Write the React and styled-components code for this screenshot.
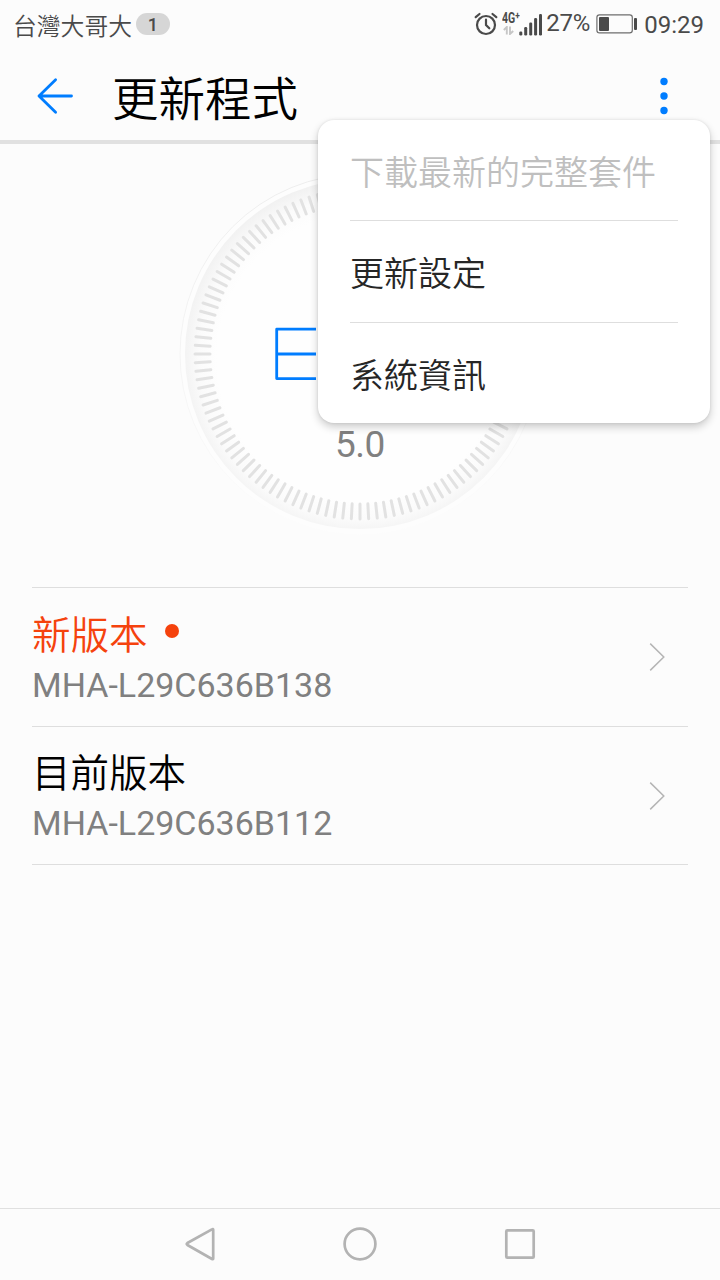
import React from 'react'
import styled, { createGlobalStyle } from 'styled-components'

const App = () => {
   const menuItems = [
      { id: 1, label: '下載最新的完整套件', disabled: true },
      { id: 2, label: '更新設定' },
      { id: 3, label: '系統資訊' },
   ]

   const versions = [
      { id: 1, title: '新版本', code: 'MHA-L29C636B138', isNew: true },
      { id: 2, title: '目前版本', code: 'MHA-L29C636B112' },
   ]

   return (
      <Screen>
         <GlobalStyle />
         <StatusBar>
            <Carrier>台灣大哥大</Carrier>
            <CountBadge>1</CountBadge>
            <StatusIcons />
         </StatusBar>
         <Header>
            <BackIcon />
            <Title>更新程式</Title>
            <MoreButton>
               <MoreDots />
               <Menu>
                  {menuItems.map((item) => (
                     <MenuItem key={item.id} $disabled={item.disabled}>
                        {item.label}
                     </MenuItem>
                  ))}
               </Menu>
            </MoreButton>
         </Header>
         <DialArea>
            <Dial />
            <DialVersion>5.0</DialVersion>
         </DialArea>
         <VersionList>
            {versions.map((item) => (
               <VersionRow key={item.id}>
                  <VersionText>
                     <VersionTitle $isNew={item.isNew}>
                        {item.title}
                        {item.isNew && <NewDot />}
                     </VersionTitle>
                     <VersionCode>{item.code}</VersionCode>
                  </VersionText>
                  <Chevron />
               </VersionRow>
            ))}
         </VersionList>
         <NavBar>
            <NavIcon viewBox="0 0 40 40">
               <path d="M31.9 5.4 L7.4 19 Q6 20 7.4 21 L32 35 Q33.2 35.6 33.2 34.4 V5.8 Q33.2 4.6 31.9 5.4 Z" />
            </NavIcon>
            <NavIcon viewBox="0 0 40 40">
               <circle cx="20" cy="20" r="15.4" />
            </NavIcon>
            <NavIcon viewBox="0 0 40 40">
               <rect x="6.3" y="6.3" width="27.4" height="27.4" rx="1" />
            </NavIcon>
         </NavBar>
      </Screen>
   )
}

export default App

const StatusIcons = () => (
   <StatusRight>
      <AlarmIcon viewBox="0 0 24 24">
         <circle cx="12" cy="13" r="9" />
         <path d="M12 7.7 V13 L15.3 16.3" />
         <path d="M1.7 5.2 L5.5 2 M22.3 5.2 L18.5 2" />
      </AlarmIcon>
      <Network>
         <NetworkType>
            4G<sup>+</sup>
         </NetworkType>
         <svg width="12" height="9" viewBox="0 0 12 9" fill="none" stroke="#c6c6c6" strokeWidth="1.9">
            <path d="M0.8 4 L3.8 1 V8.4 M7 0.6 V8 L10.2 5" />
         </svg>
      </Network>
      <svg width="24" height="23" viewBox="0 0 24 23" fill="#4a4a4a">
         <rect x="0.3" y="18.5" width="3" height="4" rx="1.2" />
         <rect x="5.2" y="14" width="3" height="8.5" rx="1.2" />
         <rect x="10.2" y="9.5" width="3" height="13" rx="1.2" />
         <rect x="15.1" y="5" width="3" height="17.5" rx="1.2" />
         <rect x="20" y="1" width="3" height="21.5" rx="1.2" />
      </svg>
      <Percent>27%</Percent>
      <BatteryIcon viewBox="0 0 42 20">
         <rect x="0.9" y="0.9" width="35.4" height="18" rx="2.6" fill="none" stroke="#6d6d6d" strokeWidth="1.2" />
         <rect x="3" y="3" width="10" height="14" rx="1" fill="#4a4a4a" />
         <rect x="38" y="4" width="3" height="12" rx="1" fill="#4a4a4a" />
      </BatteryIcon>
      <Clock>09:29</Clock>
   </StatusRight>
)

const BackIcon = () => (
   <BackSvg viewBox="0 0 40 40">
      <path d="M20.6 3.8 L4 20 L20.6 36.3 M4 20 H36.5" />
   </BackSvg>
)

const MoreDots = () => (
   <svg width="10" height="40" viewBox="0 0 10 40" fill="#007dff">
      <circle cx="5" cy="5.5" r="3.7" />
      <circle cx="5" cy="20" r="3.7" />
      <circle cx="5" cy="34.5" r="3.7" />
   </svg>
)

const Dial = () => (
   <svg width="370" height="370" viewBox="-185 -185 370 370">
      <defs>
         <radialGradient id="face" gradientUnits="userSpaceOnUse" cx="0" cy="4" r="179">
            <stop offset="0.8" stopColor="#fefefe" />
            <stop offset="0.9" stopColor="#fbfbfb" />
            <stop offset="1" stopColor="#f1f1f1" />
         </radialGradient>
         <linearGradient id="rim" x1="0" y1="0" x2="0" y2="1">
            <stop offset="0" stopColor="#ededed" />
            <stop offset="0.75" stopColor="#f8f8f8" />
            <stop offset="1" stopColor="#fdfdfd" />
         </linearGradient>
      </defs>
      <circle r="180" fill="#fdfdfd" stroke="url(#rim)" />
      <circle r="175" fill="url(#face)" />
      {/* 120 ticks, one every 3 degrees */}
      <g stroke="#e2e2e2" strokeWidth="3" strokeLinecap="round">
         {Array.from({ length: 120 }, (_, i) => (
            <line key={i} x1="0" y1="-150" x2="0" y2="-165" transform={`rotate(${i * 3})`} />
         ))}
      </g>
      <path d="M-44 -24.8 H-83.3 V24.6 H-44 M-83 0 H-44" fill="none" stroke="#007dff" strokeWidth="2.8" strokeLinejoin="round" />
   </svg>
)

const Chevron = () => (
   <ChevronSvg viewBox="0 0 16 30">
      <path d="M1.2 1.6 L14.8 15 L1.2 28.4" />
   </ChevronSvg>
)

// Styled Components
const GlobalStyle = createGlobalStyle`
   * {
      box-sizing: border-box;
   }

   body {
      margin: 0;
      background-color: #fcfcfc;
      font-family: Roboto, 'Noto Sans CJK TC', sans-serif;
   }

   svg {
      display: block;
      flex-shrink: 0;
   }
`

const Screen = styled.div`
   display: flex;
   flex-direction: column;
   width: 720px;
   height: 1280px;
   background-color: #fcfcfc;
   overflow: hidden;
`

const StatusBar = styled.div`
   display: flex;
   align-items: center;
   height: 48px;
   padding: 0 16px 0 13px;
   color: #4a4a4a;
`

const Carrier = styled.span`
   font-family: 'Noto Sans CJK TC', sans-serif;
   font-size: 23.8px;
   font-weight: 350;
   line-height: 49px;
`

const CountBadge = styled.span`
   width: 34px;
   height: 22px;
   margin-left: 4px;
   border-radius: 11px;
   background-color: #d6d6d6;
   font-size: 18px;
   font-weight: 500;
   line-height: 23px;
   text-align: center;
`

const StatusRight = styled.div`
   display: flex;
   align-items: center;
   margin-left: auto;
`

const AlarmIcon = styled.svg`
   width: 24px;
   height: 24px;
   fill: none;
   stroke: #4a4a4a;
   stroke-width: 2.2;
   stroke-linecap: round;
`

const Network = styled.div`
   display: flex;
   flex-direction: column;
   align-items: flex-start;
   width: 17px;
   height: 24px;
   margin-left: 4px;

   svg {
      margin: 1px 0 0 1px;
   }
`

const NetworkType = styled.span`
   font-size: 14px;
   font-weight: 700;
   line-height: 13px;
   white-space: nowrap;
   transform: scaleX(0.75);
   transform-origin: left;

   sup {
      font-size: 11px;
      line-height: 0;
      vertical-align: 4px;
   }
`

const Percent = styled.span`
   margin-left: 3px;
   font-size: 24px;
   line-height: 46px;
   margin-top: -2px;
   letter-spacing: -0.2px;
`

const BatteryIcon = styled.svg`
   width: 42px;
   height: 20px;
   margin-left: 6px;
`

const Clock = styled.span`
   margin-left: 6px;
   font-size: 24px;
   line-height: 48px;
   margin-top: 2px;
`

const Header = styled.header`
   display: flex;
   align-items: center;
   height: 96px;
   padding: 0 51px 0 35px;
   border-bottom: 4px solid #e1e1e1;
`

const BackSvg = styled.svg`
   width: 40px;
   height: 40px;
   margin-top: 4px;
   fill: none;
   stroke: #007dff;
   stroke-width: 2.8;
   stroke-linecap: round;
   stroke-linejoin: round;
`

const Title = styled.h1`
   margin: 3px 0 0 37px;
   font-family: 'Noto Sans CJK TC', sans-serif;
   font-size: 46.5px;
   font-weight: 350;
   line-height: 88px;
   color: #000;
`

const MoreButton = styled.div`
   position: relative;
   margin: 4px 0 0 auto;
`

const Menu = styled.ul`
   position: absolute;
   top: 44px;
   right: -41px;
   z-index: 1;
   width: 392px;
   height: 303px;
   margin: 0;
   padding: 0 32px;
   list-style: none;
   background-color: #fff;
   border-radius: 16px;
   box-shadow: 0 4px 8px rgba(0, 0, 0, 0.2), 0 0 3px rgba(0, 0, 0, 0.1);
`

const MenuItem = styled.li`
   height: 101.5px;
   font-family: 'Noto Sans CJK TC', sans-serif;
   font-size: 34px;
   font-weight: 350;
   line-height: 102px;
   color: ${(props) => (props.$disabled ? '#bfbfbf' : '#262626')};

   & + & {
      border-top: 1px solid #dedede;
   }

   &:first-child {
      height: 100px;
   }
`

const DialArea = styled.section`
   display: flex;
   flex-direction: column;
   align-items: center;
   height: 443px;
   padding-top: 25px;
`

const DialVersion = styled.div`
   margin-top: -116px;
   font-size: 37px;
   line-height: 44px;
   color: #808080;
   letter-spacing: -0.5px;
`

const VersionList = styled.section`
   margin: 0 32px;
   border-top: 1px solid #dedede;
`

const VersionRow = styled.div`
   display: flex;
   align-items: center;
   justify-content: space-between;
   height: 138.5px;
   padding-right: 23px;
   border-bottom: 1px solid #dedede;
`

const VersionText = styled.div`
   display: flex;
   flex-direction: column;
   padding-top: 2px;
`

const VersionTitle = styled.div`
   display: flex;
   align-items: center;
   font-family: 'Noto Sans CJK TC', sans-serif;
   font-size: 38.5px;
   font-weight: 350;
   line-height: 54px;
   color: ${(props) => (props.$isNew ? '#f5420d' : '#000')};
`

const NewDot = styled.span`
   width: 14px;
   height: 14px;
   margin: -1px 0 0 17px;
   border-radius: 50%;
   background-color: #f5420d;
`

const VersionCode = styled.div`
   font-size: 34px;
   line-height: 52px;
   color: #808080;
`

const ChevronSvg = styled.svg`
   width: 16px;
   height: 30px;
   margin-top: 1px;
   fill: none;
   stroke: #b5b5b5;
   stroke-width: 1.5;
`

const NavBar = styled.nav`
   display: flex;
   align-items: center;
   justify-content: center;
   gap: 120px;
   height: 72px;
   margin-top: auto;
   padding-bottom: 1px;
   border-top: 1px solid #e0e0e0;
`

const NavIcon = styled.svg`
   width: 40px;
   height: 40px;
   fill: none;
   stroke: #b3b3b3;
   stroke-width: 2.7;
   stroke-linejoin: round;
`
